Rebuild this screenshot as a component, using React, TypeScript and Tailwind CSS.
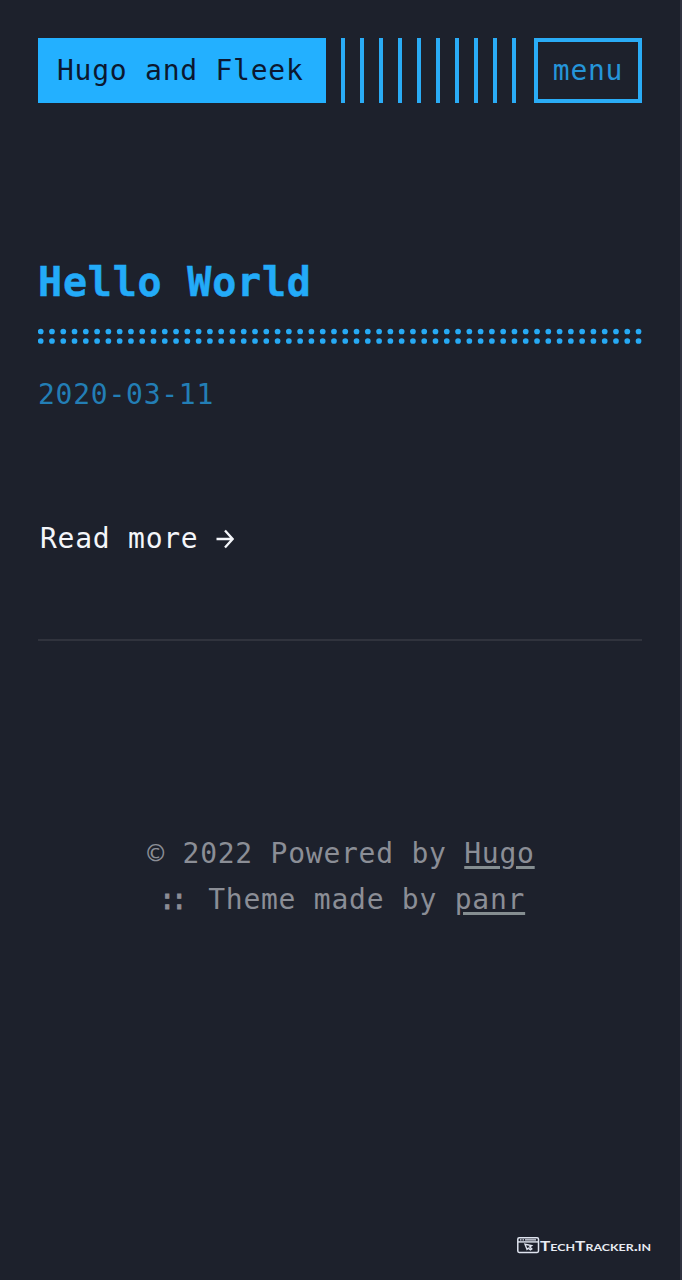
const dots = Array.from({ length: 54 }, (_, i) => 2.7 + i * 11.28);

function Header() {
  return (
    <header className="flex h-[65px] items-stretch">
      <a className="flex w-[288px] items-center bg-[#23b0ff] pl-[19px] text-[#0b1830]">
        <span className="whitespace-pre">Hugo and Fleek</span>
      </a>
      <div className="ml-[15px] flex flex-1 gap-[15px]">
        {Array.from({ length: 10 }, (_, i) => (
          <span key={i} className="w-1 bg-[#2aacf6]" />
        ))}
      </div>
      <button className="flex w-[108px] items-center justify-center border-4 border-[#2aacf6] text-[#2595d9]">
        menu
      </button>
    </header>
  );
}

function Dots() {
  return (
    <svg className="mt-[20px] block" width="604" height="16" viewBox="0 0 604 16" fill="#27aaf5">
      {dots.map((x) => (
        <g key={x}>
          <circle cx={x} cy="3.5" r="2.85" />
          <circle cx={x} cy="13" r="2.85" />
        </g>
      ))}
    </svg>
  );
}

function Arrow() {
  return (
    <svg width="18" height="20" viewBox="0 0 18 20" fill="none" stroke="#f4f6fa" strokeWidth="2.3">
      <path d="M0.5 10H16.5M9 1.6L16.6 10L9 18.4" />
    </svg>
  );
}

function Brand() {
  return (
    <div className="mt-auto flex items-center self-end pb-[25px]">
      <svg width="23" height="18" viewBox="0 0 23 18" fill="none" stroke="#dfe4ef">
        <rect x="0.8" y="0.8" width="20.7" height="14.6" rx="1.4" strokeWidth="1.5" />
        <path d="M1 4.9H21.5" strokeWidth="1.4" />
        <path d="M3 2.8H4.5M5.5 2.8H7M8 2.8H19" strokeWidth="1.3" />
        <path d="M8 7.3L14.6 8.6L12.8 9.9L14.8 11.9L13.4 12.9L11.4 11.2L10 12.4Z" strokeWidth="1.4" />
      </svg>
      <svg width="112" height="18" viewBox="0 0 112 18">
        <text
          x="0"
          y="14"
          textLength="111"
          lengthAdjust="spacingAndGlyphs"
          fill="#e8ebf2"
          className="font-['Lato',sans-serif] text-[12.5px] font-bold tracking-normal [font-variant-caps:small-caps]"
        >
          TechTracker.in
        </text>
      </svg>
    </div>
  );
}

export default function App() {
  return (
    <div className="flex h-[1280px] w-[682px] flex-col border-r-2 border-[#303340] bg-[#1d212c] pt-[38px] pr-[28px] pl-[38px] font-['DejaVu_Sans_Mono',monospace] text-[28px] leading-[46px] tracking-[0.75px]">
      <div className="w-[604px]">
        <Header />
        <main>
          <h1 className="mt-[153px] text-[40px] leading-[52px] font-bold tracking-[0.8px] text-[#23abf8] [-webkit-text-stroke:0.5px_#23abf8]">
            Hello World
          </h1>
          <Dots />
          <time className="mt-[28px] block text-[#237eb5]">2020-03-11</time>
          <a className="mt-[98px] ml-[2px] flex items-center text-[#f4f6fa]">
            <span className="mr-[18px]">Read more</span>
            <Arrow />
          </a>
        </main>
        <hr className="mt-[77px] h-[2px] border-0 bg-[#30333d]" />
        <footer className="mt-[190px] pl-[2px] text-center text-[#8b8e96]">
          <div>
            © 2022 Powered by{" "}
            <a className="underline decoration-[#858e91] decoration-[3px] underline-offset-[3px]">Hugo</a>
          </div>
          <div>
            <span className="mr-[8px] ml-[2px] tracking-[-5px] [-webkit-text-stroke:0.8px_#8b8e96]">::</span> Theme made by{" "}
            <a className="underline decoration-[#858e91] decoration-[3px] underline-offset-[3px]">panr</a>
          </div>
        </footer>
      </div>
      <Brand />
    </div>
  );
}
